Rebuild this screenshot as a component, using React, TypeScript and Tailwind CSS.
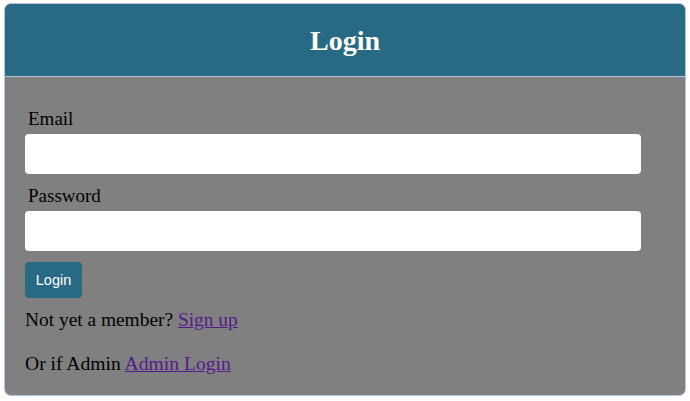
export default function App() {
  return (
    <div className="w-[690px] h-[401px] bg-white pt-[3px] pl-[4px]">
      <div className="w-[682px] h-[393px] border border-[#b0c4de] rounded-[7px] overflow-hidden bg-[#808080] font-['Liberation_Serif',serif] text-black">
        <div className="h-[73px] bg-[#286983] border-b border-[#b0c4de] flex items-center justify-center">
          <h1 className="text-[28px] font-bold text-white leading-none mt-[2px]">Login</h1>
        </div>
        <div className="pl-[20px] pt-[32px] text-[19px] leading-[20px]">
          <label className="block ml-[3px]">Email</label>
          <input type="email" className="block mt-[5px] w-[616px] h-[40px] bg-white rounded-[4px] outline-none px-2" />
          <label className="block ml-[3px] mt-[12px]">Password</label>
          <input type="password" className="block mt-[5px] w-[616px] h-[40px] bg-white rounded-[4px] outline-none px-2" />
          <button className="block mt-[11px] h-[36px] w-[57px] rounded-[4px] bg-[#286983] text-white text-[14.5px] font-['Liberation_Sans',sans-serif]">
            Login
          </button>
          <p className="mt-[12px] text-[19.4px]">
            Not yet a member? <a href="#" className="text-[#551a8b] underline">Sign up</a>
          </p>
          <p className="mt-[24px] text-[19.6px]">
            Or if Admin <a href="#" className="text-[#551a8b] underline">Admin Login</a>
          </p>
        </div>
      </div>
    </div>
  );
}
